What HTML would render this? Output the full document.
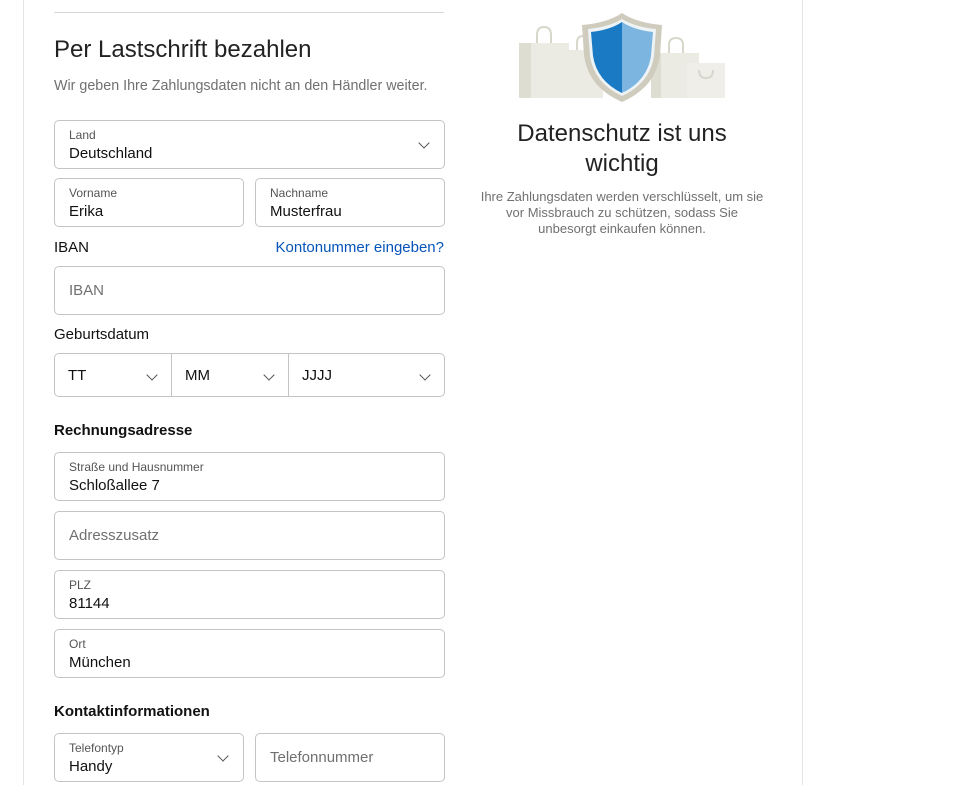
<!DOCTYPE html>
<html><head><meta charset="utf-8"><style>
*{box-sizing:border-box;margin:0;padding:0}
body{width:954px;height:785px;overflow:hidden;background:#fff;font-family:"Liberation Sans",Arial,sans-serif;color:#111;position:relative}
.a{position:absolute}
.box{position:absolute;border:1px solid #c4c4c4;border-radius:5px;background:#fff}
.lab{position:absolute;left:14px;top:7px;font-size:12px;color:#555}
.val{position:absolute;left:14px;top:24px;font-size:15px;color:#111}
.ph{position:absolute;left:14px;top:15px;font-size:15px;color:#707070}
.chev{position:absolute;width:8px;height:8px;border-right:1.3px solid #555;border-bottom:1.3px solid #555;transform:rotate(45deg)}
.t{position:absolute;font-size:15px;color:#111}
.b{font-weight:bold}
</style></head><body>
<div class="a" style="left:23px;top:0;width:1px;height:785px;background:#e5e5e5"></div>
<div class="a" style="left:802px;top:0;width:1px;height:785px;background:#e5e5e5"></div>
<div class="a" style="left:54px;top:12px;width:390px;height:1px;background:#d6d6d6"></div>
<div class="a" style="left:54px;top:36px;font-size:24px;color:#222">Per Lastschrift bezahlen</div>
<div class="a" style="left:54px;top:78px;font-size:14.3px;color:#707070">Wir geben Ihre Zahlungsdaten nicht an den Händler weiter.</div>

<div class="box" style="left:54px;top:120px;width:391px;height:49px"><div class="lab">Land</div><div class="val">Deutschland</div><div class="chev" style="right:16px;top:18px"></div></div>
<div class="box" style="left:54px;top:178px;width:190px;height:49px"><div class="lab">Vorname</div><div class="val">Erika</div></div>
<div class="box" style="left:255px;top:178px;width:190px;height:49px"><div class="lab">Nachname</div><div class="val">Musterfrau</div></div>

<div class="t" style="left:54px;top:239px">IBAN</div>
<div class="t" style="right:510px;top:239px;color:#0654ba">Kontonummer eingeben?</div>
<div class="box" style="left:54px;top:266px;width:391px;height:49px"><div class="ph">IBAN</div></div>

<div class="t" style="left:54px;top:326px">Geburtsdatum</div>
<div class="box" style="left:54px;top:353px;width:391px;height:44px"></div>
<div class="a" style="left:171px;top:354px;width:1px;height:42px;background:#c4c4c4"></div>
<div class="a" style="left:288px;top:354px;width:1px;height:42px;background:#c4c4c4"></div>
<div class="t" style="left:68px;top:367px">TT</div><div class="chev" style="left:148px;top:371px"></div>
<div class="t" style="left:185px;top:367px">MM</div><div class="chev" style="left:265px;top:371px"></div>
<div class="t" style="left:302px;top:367px">JJJJ</div><div class="chev" style="left:421px;top:371px"></div>

<div class="t b" style="left:54px;top:422px">Rechnungsadresse</div>
<div class="box" style="left:54px;top:452px;width:391px;height:49px"><div class="lab">Straße und Hausnummer</div><div class="val">Schloßallee 7</div></div>
<div class="box" style="left:54px;top:511px;width:391px;height:49px"><div class="ph">Adresszusatz</div></div>
<div class="box" style="left:54px;top:570px;width:391px;height:49px"><div class="lab">PLZ</div><div class="val">81144</div></div>
<div class="box" style="left:54px;top:629px;width:391px;height:49px"><div class="lab">Ort</div><div class="val">München</div></div>

<div class="t b" style="left:54px;top:703px">Kontaktinformationen</div>
<div class="box" style="left:54px;top:733px;width:190px;height:49px"><div class="lab">Telefontyp</div><div class="val">Handy</div><div class="chev" style="right:16px;top:18px"></div></div>
<div class="box" style="left:255px;top:733px;width:190px;height:49px"><div class="ph">Telefonnummer</div></div>

<svg class="a" style="left:515px;top:10px" width="215" height="92" viewBox="0 0 215 92">
<g fill="#ecebe3"><rect x="4" y="33" width="50" height="55"/><rect x="48" y="40" width="40" height="48"/><rect x="136" y="43" width="48" height="45"/><rect x="172" y="53" width="38" height="35" fill="#efeee8"/></g>
<g fill="#deddd2"><rect x="4" y="33" width="12" height="55"/><rect x="136" y="43" width="10" height="45"/></g>
<g fill="none" stroke="#d8d7cb" stroke-width="2"><path d="M22 33 V25 q0-8 7-8 q7 0 7 8 V33"/><path d="M62 40 V33 q0-7 6-7 q6 0 6 7"/><path d="M154 43 V35 q0-7 7-7 q7 0 7 7 V43"/><path d="M184 60 q0 8 7 8 q7 0 7-8"/></g>
<path d="M107 3 q-15 10-40 12 l2 30 q4 32 38 47 q34-15 38-47 l2-30 q-25-2-40-12z" fill="#cfcbbd"/>
<path d="M107 9 q-13 8-34 10 l2 27 q4 27 32 40 q28-13 32-40 l2-27 q-21-2-34-10z" fill="#eef3f6"/>
<path d="M107 12 q-12 8-31 10 l2 24 q4 25 29 37z" fill="#1a7ac4"/>
<path d="M107 12 q12 8 31 10 l-2 24 q-4 25-29 37z" fill="#7cb5e0"/>
</svg>
<div class="a" style="left:472px;top:119px;width:300px;text-align:center;font-size:24px;line-height:30px;color:#222">Datenschutz ist uns<br>wichtig</div>
<div class="a" style="left:477px;top:189px;width:290px;text-align:center;font-size:13px;line-height:16px;color:#707070">Ihre Zahlungsdaten werden verschlüsselt, um sie vor Missbrauch zu schützen, sodass Sie unbesorgt einkaufen können.</div>
</body></html>
